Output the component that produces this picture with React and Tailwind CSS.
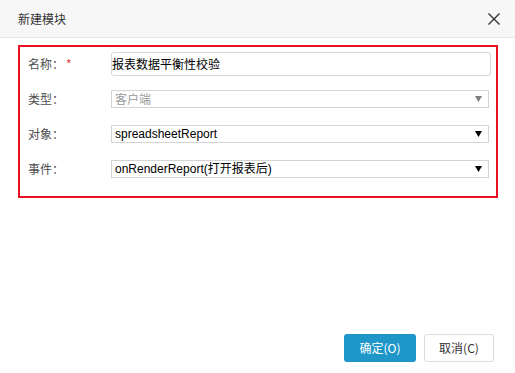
const cjk = "font-['Noto_Sans_CJK_SC',sans-serif]";
const arial = "font-['Liberation_Sans','Noto_Sans_CJK_SC',sans-serif]";

function Arrow({ color }) {
  return (
    <svg width="7" height="6" viewBox="0 0 7 6" className="mr-[6px] shrink-0">
      <polygon points="0,0 7,0 3.5,6" fill={color} />
    </svg>
  );
}

function SelectBox({ value, muted }) {
  return (
    <div
      className={`flex h-[18px] flex-1 items-center justify-between border border-[#d4d4d4] bg-white pl-[3px] text-[12px] leading-none ${
        muted ? `${cjk} text-[#999]` : `${arial} text-black`
      }`}
    >
      <span>{value}</span>
      <Arrow color={muted ? "#7f7f7f" : "#000"} />
    </div>
  );
}

function Row({ label, required, children, className }) {
  return (
    <div className={`flex items-center ${className}`}>
      <div className={`w-[91px] shrink-0 pl-2 text-[12px] text-[#4d4d4d] ${cjk}`}>
        {label}
        {required && <span className="ml-[2px] text-[#e4393c]">*</span>}
      </div>
      {children}
    </div>
  );
}

export default function App() {
  return (
    <div className="flex h-[373px] w-[515px] flex-col bg-white">
      <div className="flex h-[38px] shrink-0 items-center justify-between border-b border-[#e8e8e8] bg-[#f7f7f7] pl-[18px] pr-[15px]">
        <span className={`text-[12px] text-[#333] ${cjk}`}>新建模块</span>
        <svg width="12" height="12" viewBox="0 0 12 12">
          <path d="M0.5 0.5 L11.5 11.5 M11.5 0.5 L0.5 11.5" stroke="#333" strokeWidth="1.4" />
        </svg>
      </div>

      <div className="flex-1 px-[18px] pt-[7px]">
        <div className="h-[153px] w-[480px] border-2 border-[#e81123] pt-[5px]">
          <Row label="名称：" required>
            <div
              className={`mr-[5px] flex h-[24px] flex-1 items-center rounded-[3px] border border-[#d9d9d9] text-[12px] text-black ${cjk}`}
            >
              报表数据平衡性校验
            </div>
          </Row>
          <Row label="类型：" className="mt-[14px] pr-[7px]">
            <SelectBox value="客户端" muted />
          </Row>
          <Row label="对象：" className="mt-[17px] pr-[7px]">
            <SelectBox value="spreadsheetReport" />
          </Row>
          <Row label="事件：" className="mt-[17px] pr-[7px]">
            <SelectBox value="onRenderReport(打开报表后)" />
          </Row>
        </div>
      </div>

      <div className="flex shrink-0 justify-end gap-2 pb-[11px] pr-[21px]">
        <button
          className={`h-[28px] w-[72px] rounded-[3px] bg-[#1e97c8] text-[12px] text-white ${cjk}`}
        >
          确定(O)
        </button>
        <button
          className={`h-[28px] w-[70px] rounded-[3px] border border-[#dcdcdc] bg-white text-[12px] text-[#333] ${cjk}`}
        >
          取消(C)
        </button>
      </div>
    </div>
  );
}
